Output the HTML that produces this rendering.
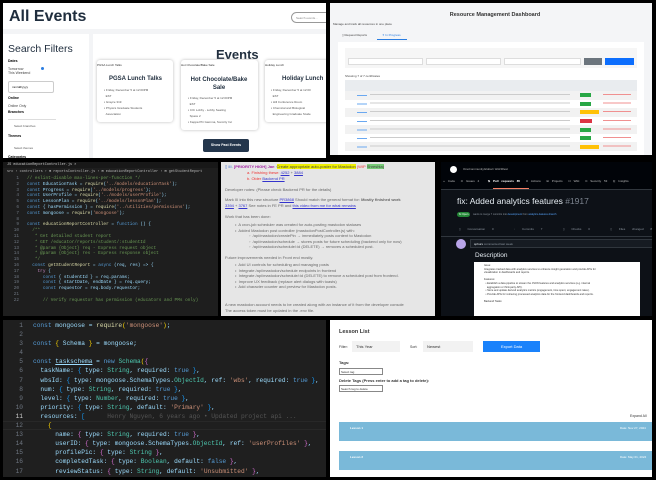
<!DOCTYPE html><html><head><style>
*{margin:0;padding:0;box-sizing:border-box}
body{width:656px;height:480px;background:#000;position:relative;overflow:hidden;font-family:"Liberation Sans",sans-serif}
.a{position:absolute}
.mono{font-family:"Liberation Mono",monospace}
.t{position:absolute;white-space:nowrap}
</style></head><body>

<!-- Panel 1 -->
<div class="a" style="left:3px;top:3px;width:323px;height:155px;background:#f3f4f6;overflow:hidden">
 <div class="a" style="left:0;top:0;width:323px;height:26px;background:#fff"></div>
 <div class="t" style="left:6px;top:5px;font-size:16px;font-weight:bold;color:#1f2d3d">All Events</div>
 <div class="a" style="left:288px;top:9px;width:40px;height:11px;border:1px solid #999;border-radius:6px;font-size:3px;color:#888;padding:3px 4px">Search events...</div>
 <div class="a" style="left:0;top:31px;width:86px;height:130px;background:#fff"></div>
 <div class="t" style="left:5px;top:40px;font-size:10.5px;color:#1f2d3d">Search Filters</div>
 <div class="t" style="left:5px;top:56px;font-size:3.5px;font-weight:bold">Dates</div>
 <div class="t" style="left:5px;top:64px;font-size:3.5px;color:#444">Tomorrow<br>This Weekend</div>
 <div class="a" style="left:38px;top:64px;width:3px;height:3px;border-radius:50%;background:#2a7de1"></div>
 <div class="a" style="left:5px;top:78px;width:46px;height:12px;border:1px solid #ccc;border-radius:2px;font-size:3px;padding:3px">mm/dd/yyyy</div>
 <div class="t" style="left:5px;top:93px;font-size:3.5px;font-weight:bold">Online</div>
 <div class="t" style="left:5px;top:101px;font-size:3.5px;color:#444">Online Only</div>
 <div class="t" style="left:5px;top:107px;font-size:3.5px;font-weight:bold">Branches</div>
 <div class="a" style="left:5px;top:116px;width:48px;height:12px;border-top:1px solid #ddd;font-size:3px;padding:4px 6px;color:#555">Select branches</div>
 <div class="t" style="left:5px;top:131px;font-size:3.5px;font-weight:bold">Themes</div>
 <div class="a" style="left:5px;top:139px;width:48px;height:12px;font-size:3px;padding:4px 6px;color:#555">Select themes</div>
 <div class="t" style="left:5px;top:152px;font-size:3.5px;font-weight:bold">Categories</div>
 <div class="a" style="left:90px;top:31px;width:240px;height:130px;background:#fff"></div>
 <div class="t" style="left:213px;top:44px;font-size:13px;font-weight:bold;color:#1f2d3d">Events</div>
 <div class="a" style="left:94px;top:57px;width:76px;height:62px;background:#fff;box-shadow:0 0 3px #bbb;border-radius:3px"></div>
 <div class="a" style="left:178px;top:57px;width:77px;height:70px;background:#fff;box-shadow:0 0 3px #bbb;border-radius:3px"></div>
 <div class="a" style="left:262px;top:57px;width:70px;height:62px;background:#fff;box-shadow:0 0 3px #bbb;border-radius:3px"></div>
 <div class="t" style="left:94px;top:60px;font-size:3px;color:#333">PGSA Lunch Talks</div>
 <div class="t" style="left:178px;top:60px;font-size:3px;color:#333">Hot Chocolate/Bake Sale</div>
 <div class="t" style="left:262px;top:60px;font-size:3px;color:#333">Holiday Lunch</div>
 <div class="t" style="left:106px;top:73px;font-size:6px;font-weight:bold;color:#1f2d3d">PGSA Lunch Talks</div>
 <div class="t" style="left:186px;top:73px;font-size:6px;font-weight:bold;color:#1f2d3d;text-align:center;width:60px;white-space:normal;line-height:8px">Hot Chocolate/Bake Sale</div>
 <div class="t" style="left:279px;top:73px;font-size:6px;font-weight:bold;color:#1f2d3d">Holiday Lunch</div>
 <div class="t" style="left:101px;top:84px;font-size:3px;color:#555;line-height:6px">▪ Friday, December 5 at 12:00PM<br>&nbsp;&nbsp;EST<br>▪ Grayce 319<br>▪ Physics Graduate Students<br>&nbsp;&nbsp;Association</div>
 <div class="t" style="left:185px;top:92px;font-size:3px;color:#555;line-height:6px">▪ Friday, December 5 at 12:00PM<br>&nbsp;&nbsp;EST<br>▪ CIC Lobby - Lobby Seating<br>&nbsp;&nbsp;Space 2<br>▪ Kappa Phi Gamma, Sorority Inc</div>
 <div class="t" style="left:268px;top:84px;font-size:3px;color:#555;line-height:6px">▪ Friday, December 5 at 12:00<br>&nbsp;&nbsp;EST<br>▪ Hill Conference Room<br>▪ Chemical and Biological<br>&nbsp;&nbsp;Engineering Graduate Stude</div>
 <div class="a" style="left:200px;top:136px;width:46px;height:13px;background:#24364c;border-radius:2px;color:#fff;font-size:3.5px;font-weight:bold;text-align:center;line-height:13px">Show Past Events</div>
</div>

<!-- Panel 2 -->
<div class="a" style="left:330px;top:3px;width:322px;height:152px;background:#f4f5f7;overflow:hidden;font-size:3px;color:#444">
 <div class="t" style="left:0;width:330px;text-align:center;top:9px;font-size:5.5px;font-weight:bold;color:#333">Resource Management Dashboard</div>
 <div class="t" style="left:3px;top:19px">Manage and track all resources in one place</div>
 <div class="t" style="left:12px;top:30px">▯ Request Reports</div>
 <div class="t" style="left:52px;top:30px;color:#2a7de1">✦ In Progress</div>
 <div class="a" style="left:47px;top:36px;width:30px;height:1px;background:#2a7de1"></div>
 <div class="a" style="left:8px;top:39px;width:306px;height:113px;background:#fff"></div>
 <div class="a" style="left:15px;top:45px;width:292px;height:20px;background:#f6f6f6"></div>
 <div class="a" style="left:18px;top:55px;width:75px;height:7px;background:#fff;border:1px solid #ddd"></div>
 <div class="a" style="left:96px;top:55px;width:75px;height:7px;background:#fff;border:1px solid #ddd"></div>
 <div class="a" style="left:174px;top:55px;width:77px;height:7px;background:#fff;border:1px solid #ddd"></div>
 <div class="a" style="left:254px;top:55px;width:18px;height:7px;background:#6c757d"></div>
 <div class="a" style="left:275px;top:55px;width:29px;height:7px;background:#0d6efd"></div>
 <div class="t" style="left:15px;top:71px">Showing 7 of 7 certificates</div>
 <div class="a" style="left:15px;top:77px;width:292px;height:11px;background:#e9ecef"></div>
 <div class="a" style="left:15px;top:88px;width:292px;height:9px;background:#f2f2f2"></div>
 <div class="a" style="left:15px;top:105px;width:292px;height:9px;background:#f2f2f2"></div>
 <div class="a" style="left:15px;top:122px;width:292px;height:9px;background:#f2f2f2"></div>
 <div class="a" style="left:15px;top:139px;width:292px;height:9px;background:#f2f2f2"></div>
 <div class="a" style="left:27px;top:92px;width:10px;height:56px;background:repeating-linear-gradient(#6aa8f0 0 1px,transparent 1px 8.6px)"></div>
 <div class="a" style="left:250px;top:90px;width:11px;height:4px;background:#28a745"></div>
 <div class="a" style="left:250px;top:99px;width:11px;height:4px;background:#28a745"></div>
 <div class="a" style="left:250px;top:107px;width:19px;height:4px;background:#ffc107"></div>
 <div class="a" style="left:250px;top:116px;width:12px;height:4px;background:#dc3545"></div>
 <div class="a" style="left:250px;top:125px;width:11px;height:4px;background:#28a745"></div>
 <div class="a" style="left:250px;top:133px;width:11px;height:4px;background:#28a745"></div>
 <div class="a" style="left:250px;top:142px;width:19px;height:4px;background:#ffc107"></div>
 <div class="a" style="left:273px;top:91px;width:28px;height:56px;background:repeating-linear-gradient(#f09090 0 1px,transparent 1px 8.6px)"></div>
 <div class="a" style="left:40px;top:91px;width:200px;height:56px;background:repeating-linear-gradient(#ccc 0 1px,transparent 1px 8.6px)"></div>
</div>

<!-- Middle code -->
<div class="a mono" style="left:3px;top:162px;width:215px;height:154px;background:#1e1e1e;overflow:hidden;font-size:4.4px;line-height:5.8px;color:#9cdcfe">
 <div class="a" style="left:0;top:0;width:215px;height:6px;background:#181818;color:#ccc;padding-left:4px;font-size:3.5px;line-height:6px">JS educationReportController.js ×</div>
 <div class="t" style="left:4px;top:8px;color:#bbb;font-size:3.5px">src › controllers › ⊞ reportsController.js › ⊞ educationReportController › ⊞ getStudentReport</div>
 <div class="a" style="left:4px;top:14px;color:#6e7681;line-height:5.8px;text-align:right;width:12px">1<br>2<br>3<br>4<br>5<br>6<br>7<br>8<br>9<br>10<br>11<br>12<br>13<br>14<br>15<br>16<br>17<br>18<br>19<br>20<br>21<br>22</div>
 <div class="a" style="left:24px;top:14px;white-space:pre"><span style="color:#6a9955">// eslint-disable max-lines-per-function */</span>
<span style="color:#569cd6">const</span> EducationTask = <span style="color:#dcdcaa">require</span>(<span style="color:#ce9178">'../models/educationTask'</span>);
<span style="color:#569cd6">const</span> Progress = <span style="color:#dcdcaa">require</span>(<span style="color:#ce9178">'../models/progress'</span>);
<span style="color:#569cd6">const</span> UserProfile = <span style="color:#dcdcaa">require</span>(<span style="color:#ce9178">'../models/userProfile'</span>);
<span style="color:#569cd6">const</span> LessonPlan = <span style="color:#dcdcaa">require</span>(<span style="color:#ce9178">'../models/lessonPlan'</span>);
<span style="color:#569cd6">const</span> { hasPermission } = <span style="color:#dcdcaa">require</span>(<span style="color:#ce9178">'../utilities/permissions'</span>);
<span style="color:#569cd6">const</span> mongoose = <span style="color:#dcdcaa">require</span>(<span style="color:#ce9178">'mongoose'</span>);

<span style="color:#569cd6">const</span> <span style="color:#dcdcaa">educationReportController</span> = <span style="color:#569cd6">function</span> () {
  <span style="color:#6a9955">/**
   * Get detailed student report
   * GET /educator/reports/student/:studentId
   * @param {Object} req - Express request object
   * @param {Object} res - Express response object
   */</span>
  <span style="color:#569cd6">const</span> <span style="color:#dcdcaa">getStudentReport</span> = <span style="color:#569cd6">async</span> (req, res) => {
    <span style="color:#c586c0">try</span> {
      <span style="color:#569cd6">const</span> { studentId } = req.params;
      <span style="color:#569cd6">const</span> { startDate, endDate } = req.query;
      <span style="color:#569cd6">const</span> requestor = req.body.requestor;

      <span style="color:#6a9955">// Verify requestor has permission (educators and PMs only)</span></div>
</div>

<!-- Gray doc -->
<div class="a" style="left:221px;top:162px;width:214px;height:154px;background:#e6e6e6;overflow:hidden;font-size:4px;line-height:5.6px;color:#666">
 <div class="t" style="left:4px;top:2px"><span style="color:#3366cc">▯ III.</span> <span style="color:#a020a0;font-weight:bold">[PRIORITY HIGH] Jae</span>: <span style="background:#ee0;color:#444">Create appropriate auto-poster for Mastodon</span> <span style="color:#e33">(WIP</span> <span style="background:#7c7;color:#444">Shreshta)</span></div>
 <div class="t" style="left:26px;top:8px"><span style="color:#e33">a. Finishing these: </span><span style="color:#33c;text-decoration:underline">4252</span> + <span style="color:#33c;text-decoration:underline">3884</span></div>
 <div class="t" style="left:26px;top:14px"><span style="color:#e33">b. Older</span> <span style="color:#33c;text-decoration:underline">Backend PR</span></div>
 <div class="t" style="left:4px;top:25px">Developer notes: (Please check Backend PR for the details)</div>
 <div class="t" style="left:4px;top:35px">Mark III into this new structure <span style="color:#33c;text-decoration:underline">PR3868</span> Should match the general format for: <b>Mostly finished work</b></div>
 <div class="t" style="left:4px;top:41px"><span style="color:#33c;text-decoration:underline">3394</span> + <span style="color:#33c;text-decoration:underline">3767</span> See notes in FE PR and <span style="color:#33c;text-decoration:underline">this video from me for what remains</span></div>
 <div class="t" style="left:4px;top:52px">Work that has been done:</div>
 <div class="t" style="left:14px;top:60px">•&nbsp; A cron-job scheduler was created for auto-posting mastodon statuses<br>•&nbsp; Added Mastodon post controller (mastodonPostController.js) with:</div>
 <div class="t" style="left:28px;top:71px">◦&nbsp; /api/mastodon/createPin → immediately posts content to Mastodon<br>◦&nbsp; /api/mastodon/schedule → stores posts for future scheduling (backend only for now)<br>◦&nbsp; /api/mastodon/schedule/:id (DELETE) → removes a scheduled post.</div>
 <div class="t" style="left:4px;top:93px">Future improvements needed in Front end mostly.</div>
 <div class="t" style="left:14px;top:100px">•&nbsp; Add UI controls for scheduling and managing posts<br>•&nbsp; Integrate /api/mastodon/schedule endpoints in frontend<br>•&nbsp; Integrate /api/mastodon/schedule/:id (DELETE) to remove a scheduled post from frontend.<br>•&nbsp; Improve UX feedback (replace alert dialogs with toasts)<br>•&nbsp; Add character counter and preview for Mastodon posts.</div>
 <div class="t" style="left:4px;top:140px">A new mastodon account needs to be created along with an instance of it from the developer console<br>The access token must be updated in the .env file.</div>
</div>

<!-- GitHub -->
<div class="a" style="left:441px;top:162px;width:211px;height:154px;background:#0d1117;overflow:hidden;font-size:3px;color:#c9d1d9">
 <div class="a" style="left:0;top:0;width:211px;height:28px;background:#010409;border-bottom:1px solid #30363d"></div>
 <div class="a" style="left:9px;top:4px;width:7px;height:7px;border-radius:50%;background:#fff"></div>
 <div class="t" style="left:22px;top:5px;color:#bbb">OneCommunityGlobal / HGNRest</div>
 <div class="t" style="left:2px;top:17px;color:#bbb;word-spacing:2px">‹› Code &nbsp;⊙ Issues 4 &nbsp;&nbsp;<b style="color:#fff">⇅ Pull requests 85</b> &nbsp;⊙ Actions &nbsp;⊞ Projects &nbsp;⊡ Wiki &nbsp;⊙ Security 53 &nbsp;⊵ Insights</div>
 <div class="a" style="left:52px;top:26px;width:36px;height:1px;background:#f78166"></div>
 <div class="t" style="left:16px;top:34px;font-size:8.5px;color:#e6edf3">fix: Added analytics features <span style="color:#7d8590">#1917</span></div>
 <div class="a" style="left:16px;top:50px;width:13px;height:5px;background:#238636;border-radius:3px;color:#fff;font-size:2.8px;line-height:5px;text-align:center">⇅ Open</div>
 <div class="t" style="left:32px;top:51px;color:#8b949e;font-size:2.5px">wants to merge 7 commits into <span style="color:#58a6ff">development</span> from <span style="color:#58a6ff">analytics-features-branch</span></div>
 <div class="t" style="left:18px;top:65px;color:#8b949e;word-spacing:6px">▯ Conversation 0 &nbsp; ◦ Commits 7 &nbsp; ▯ Checks 0 &nbsp; ▯ Files changed 8</div>
 <div class="a" style="left:0;top:74px;width:211px;height:1px;background:#30363d"></div>
 <div class="a" style="left:15px;top:77px;width:10px;height:10px;border-radius:50%;background:#b8a4e8"></div>
 <div class="a" style="left:29px;top:77px;width:190px;height:9px;background:#161b22;border:1px solid #30363d"></div>
 <div class="t" style="left:33px;top:80px;color:#e6edf3">sphurs <span style="color:#8b949e">commented last week</span></div>
 <div class="t" style="left:34px;top:90px;font-size:6.5px;color:#e6edf3">Description</div>
 <div class="a" style="left:33px;top:100px;width:166px;height:60px;background:#fff;color:#333;font-size:2.6px;line-height:3.6px;padding:2px 10px">Issue:<br>Integrates tracked data with analytics services to enhance insight generation and provide APIs for<br>visualization in dashboards and reports.<br><br>Features:<br>&nbsp;&nbsp;• Establish a data pipeline to stream the JSON features and analytics services (e.g. internal<br>&nbsp;&nbsp;&nbsp;&nbsp;aggregation or third-party API).<br>&nbsp;&nbsp;• Store and update derived analytics metrics (engagement, time spent, engagement rates).<br>&nbsp;&nbsp;• Provide APIs for retrieving processed analytics data for the frontend dashboards and reports.<br><br>Backend Tasks:</div>
</div>

<!-- Bottom code -->
<div class="a mono" style="left:3px;top:320px;width:323px;height:157px;background:#1f1f1f;overflow:hidden;font-size:6.2px;line-height:9.1px;color:#9cdcfe">
 <div class="a" style="left:0;top:1px;width:20px;text-align:right;color:#6e7681">1<br>2<br>3<br>4<br>5<br>6<br>7<br>8<br>9<br>10<br><span style="color:#ccc">11</span><br>12<br>13<br>14<br>15<br>16<br>17</div>
 <div class="a" style="left:0;top:101px;width:323px;height:9px;border-top:1px solid #282828;border-bottom:1px solid #282828"></div>
 <div class="a" style="left:30px;top:1px;white-space:pre"><span style="color:#569cd6">const</span> mongoose = <span style="color:#dcdcaa">require</span><span style="color:#ffd700">(</span><span style="color:#ce9178">'mongoose'</span><span style="color:#ffd700">)</span>;

<span style="color:#569cd6">const</span> <span style="color:#ffd700">{</span> Schema <span style="color:#ffd700">}</span> = mongoose;

<span style="color:#569cd6">const</span> <span style="text-decoration:underline">taskschema</span> = <span style="color:#569cd6">new</span> <span style="color:#4ec9b0">Schema</span><span style="color:#ffd700">(</span><span style="color:#da70d6">{</span>
  taskName: <span style="color:#179fff">{</span> type: <span style="color:#4ec9b0">String</span>, required: <span style="color:#569cd6">true</span> <span style="color:#179fff">}</span>,
  wbsId: <span style="color:#179fff">{</span> type: mongoose.SchemaTypes.<span style="color:#4ec9b0">ObjectId</span>, ref: <span style="color:#ce9178">'wbs'</span>, required: <span style="color:#569cd6">true</span> <span style="color:#179fff">}</span>,
  num: <span style="color:#179fff">{</span> type: <span style="color:#4ec9b0">String</span>, required: <span style="color:#569cd6">true</span> <span style="color:#179fff">}</span>,
  level: <span style="color:#179fff">{</span> type: <span style="color:#4ec9b0">Number</span>, required: <span style="color:#569cd6">true</span> <span style="color:#179fff">}</span>,
  priority: <span style="color:#179fff">{</span> type: <span style="color:#4ec9b0">String</span>, default: <span style="color:#ce9178">'Primary'</span> <span style="color:#179fff">}</span>,
  resources: <span style="color:#179fff">[</span>      <span style="color:#555">Henry Nguyen, 6 years ago • Updated project api ...</span>
    <span style="color:#ffd700">{</span>
      name: <span style="color:#da70d6">{</span> type: <span style="color:#4ec9b0">String</span>, required: <span style="color:#569cd6">true</span> <span style="color:#da70d6">}</span>,
      userID: <span style="color:#da70d6">{</span> type: mongoose.SchemaTypes.<span style="color:#4ec9b0">ObjectId</span>, ref: <span style="color:#ce9178">'userProfiles'</span> <span style="color:#da70d6">}</span>,
      profilePic: <span style="color:#da70d6">{</span> type: <span style="color:#4ec9b0">String</span> <span style="color:#da70d6">}</span>,
      completedTask: <span style="color:#da70d6">{</span> type: <span style="color:#4ec9b0">Boolean</span>, default: <span style="color:#569cd6">false</span> <span style="color:#da70d6">}</span>,
      reviewStatus: <span style="color:#da70d6">{</span> type: <span style="color:#4ec9b0">String</span>, default: <span style="color:#ce9178">'Unsubmitted'</span> <span style="color:#da70d6">}</span>,</div>
</div>

<!-- Lesson list -->
<div class="a" style="left:330px;top:320px;width:322px;height:157px;background:#fff;overflow:hidden;font-size:4px;color:#333">
 <div class="t" style="left:9px;top:9px;font-size:5.5px;font-weight:bold">Lesson List</div>
 <div class="t" style="left:9px;top:25px;font-size:3.5px">Filter:</div>
 <div class="a" style="left:22px;top:21px;width:48px;height:11px;background:#f2f2f2;padding:3px 4px">This Year</div>
 <div class="t" style="left:80px;top:25px;font-size:3.5px">Sort:</div>
 <div class="a" style="left:93px;top:21px;width:50px;height:11px;background:#f2f2f2;padding:3px 4px">Newest</div>
 <div class="a" style="left:153px;top:21px;width:57px;height:11px;background:#1a82fb;color:#fff;text-align:center;line-height:11px">Export Data</div>
 <div class="t" style="left:9px;top:40px;font-weight:bold">Tags:</div>
 <div class="a" style="left:9px;top:48px;width:44px;height:7px;border:1px solid #888;font-size:3px;padding:1px">Select tag</div>
 <div class="t" style="left:9px;top:58px;font-weight:bold">Delete Tags (Press enter to add a tag to delete):</div>
 <div class="a" style="left:9px;top:65px;width:44px;height:7px;border:1px solid #888;font-size:3px;padding:1px">Search tag to delete</div>
 <div class="t" style="left:300px;top:94px;font-size:3.5px">Expand All</div>
 <div class="a" style="left:9px;top:102px;width:320px;height:19px;background:#7ab9d9"></div>
 <div class="a" style="left:9px;top:131px;width:320px;height:19px;background:#7ab9d9"></div>
 <div class="t" style="left:20px;top:106px;color:#fff;font-size:3px;font-weight:bold">Lesson 1</div>
 <div class="t" style="left:20px;top:135px;color:#fff;font-size:3px;font-weight:bold">Lesson 2</div>
 <div class="t" style="left:290px;top:106px;color:#fff;font-size:3px">Date: Nov 27, 2024</div>
 <div class="t" style="left:290px;top:135px;color:#fff;font-size:3px">Date: May 01, 2024</div>
</div>
</body></html>
